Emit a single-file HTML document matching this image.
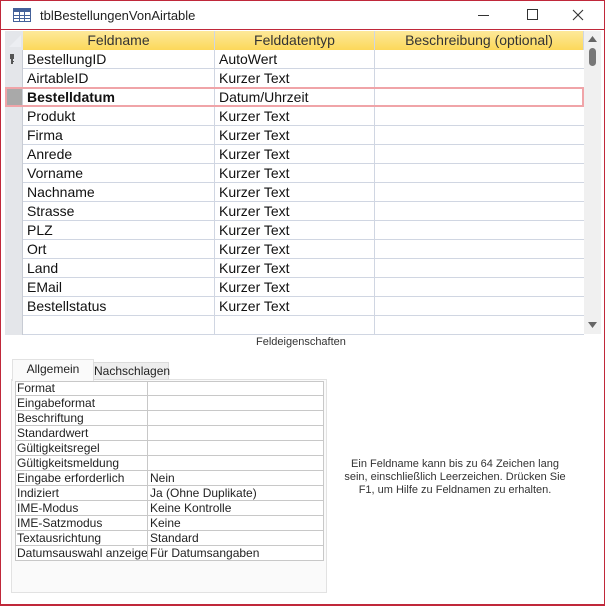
<!DOCTYPE html><html><head><style>
*{margin:0;padding:0;box-sizing:border-box}
body{width:605px;height:606px;background:#fff;font-family:"Liberation Sans",sans-serif;position:relative;overflow:hidden;color:#222}
.a{position:absolute}
.win{left:0;top:0;width:605px;height:606px;border:1px solid #c0283a;border-bottom-width:2px}
.hdr{top:31px;height:19px;background:linear-gradient(#fde99a,#fcd85a);border-right:1px solid #d0d6e2;font-size:14px;text-align:center;line-height:19px;color:#333}
.row{left:5px;width:579px;height:19px;border-bottom:1px solid #d0d6e2}
.c{position:absolute;top:0;height:19px;line-height:19px;font-size:14px;padding-left:4px;color:#111}
.sel{position:absolute;left:0;top:0;width:18px;height:19px;background:#e4e6ea;border-right:1px solid #c8ccd4}
.pr{left:15px;width:309px;height:15px;border-bottom:1px solid #c8c8c8;font-size:12px;line-height:14px}
.pr span{position:absolute;top:0}
</style></head><body>
<div class="a win"></div>
<!-- title -->
<svg class="a" style="left:13px;top:8px" width="18" height="14"><rect x=".5" y=".5" width="17" height="13" fill="#fff" stroke="#44619a"/><rect x="1" y="1" width="16" height="3" fill="#44619a"/><path d="M1 7.5h16M1 10.5h16M6.5 4v10M11.5 4v10" stroke="#44619a"/></svg>
<div class="a" style="left:40px;top:8px;font-size:13px;color:#222">tblBestellungenVonAirtable</div>
<div class="a" style="left:478px;top:15px;width:11px;height:1px;background:#333"></div>
<div class="a" style="left:527px;top:9px;width:11px;height:11px;border:1px solid #333"></div>
<svg class="a" style="left:572px;top:9px" width="12" height="12"><path d="M1 1L11 11M11 1L1 11" stroke="#333" stroke-width="1.1"/></svg>
<div class="a" style="left:1px;top:29px;width:603px;height:1px;background:#c0283a"></div>
<!-- grid -->
<div class="a" style="left:5px;top:31px;width:18px;height:19px;background:#e4e6ea"></div>
<svg class="a" style="left:6px;top:32px" width="16" height="16"><path d="M3 15L15 3V15Z" fill="#eceef2"/></svg>
<div class="a hdr" style="left:23px;width:192px">Feldname</div>
<div class="a hdr" style="left:215px;width:160px">Felddatentyp</div>
<div class="a hdr" style="left:375px;width:209px">Beschreibung (optional)</div>
<div id="g"></div>
<div class="a" style="left:584px;top:31px;width:17px;height:303px;background:#f0f0f0"></div>
<svg class="a" style="left:586px;top:33px" width="13" height="300"><path d="M2 9L6.5 3L11 9Z" fill="#666"/><rect x="3" y="15" width="7" height="18" rx="3.5" fill="#777"/><path d="M2 289L6.5 295L11 289Z" fill="#666"/></svg>
<div class="a" style="left:256px;top:336px;font-size:11px;color:#333">Feldeigenschaften</div>
<!-- props -->
<div class="a" style="left:11px;top:379px;width:316px;height:214px;background:#fafafa;border:1px solid #e2e2e2"></div>
<div class="a" style="left:12px;top:359px;width:82px;height:22px;background:#fafafa;border:1px solid #e2e2e2;border-bottom:none;font-size:12px;text-align:center;line-height:19px">Allgemein</div>
<div class="a" style="left:93px;top:362px;width:76px;height:18px;background:#eeeeee;border:1px solid #dcdcdc;font-size:12px;text-align:center;line-height:17px">Nachschlagen</div>
<div class="a" style="left:15px;top:381px;width:309px;height:180px;border:1px solid #c8c8c8;border-bottom:none;background:#fff"></div>
<div class="a" style="left:147px;top:381px;width:1px;height:180px;background:#c8c8c8"></div>
<div id="p"></div>
<div class="a" style="left:340px;top:458px;width:230px;font-size:11px;line-height:13px;text-align:center;color:#333">Ein Feldname kann bis zu 64 Zeichen lang sein, einschließlich Leerzeichen. Drücken Sie F1, um Hilfe zu Feldnamen zu erhalten.</div>
<script>
var r=[["BestellungID","AutoWert"],["AirtableID","Kurzer Text"],["Bestelldatum","Datum/Uhrzeit"],["Produkt","Kurzer Text"],["Firma","Kurzer Text"],["Anrede","Kurzer Text"],["Vorname","Kurzer Text"],["Nachname","Kurzer Text"],["Strasse","Kurzer Text"],["PLZ","Kurzer Text"],["Ort","Kurzer Text"],["Land","Kurzer Text"],["EMail","Kurzer Text"],["Bestellstatus","Kurzer Text"],["",""]];
var h="";r.forEach(function(x,i){var t=50+i*19;var s=i==2?'background:#a9a9a9':'';
h+='<div class="a row" style="top:'+t+'px"><div class="sel" style="'+s+'"></div><div class="c" style="left:18px;width:192px;border-right:1px solid #d0d6e2;'+(i==2?'font-weight:bold':'')+'">'+x[0]+'</div><div class="c" style="left:210px;width:160px;border-right:1px solid #d0d6e2">'+x[1]+'</div></div>';});
h+='<div class="a" style="left:5px;top:87px;width:579px;height:20px;border:2px solid #f0a4a8"></div>';
h+='<svg class="a" style="left:7px;top:53px" width="10" height="14"><path d="M3 1h4v5H6v2h1v1H6v2H4V6H3z" fill="#555"/></svg>';
document.getElementById("g").innerHTML=h;
var p=[["Format",""],["Eingabeformat",""],["Beschriftung",""],["Standardwert",""],["Gültigkeitsregel",""],["Gültigkeitsmeldung",""],["Eingabe erforderlich","Nein"],["Indiziert","Ja (Ohne Duplikate)"],["IME-Modus","Keine Kontrolle"],["IME-Satzmodus","Keine"],["Textausrichtung","Standard"],["Datumsauswahl anzeigen","Für Datumsangaben"]];
h="";p.forEach(function(x,i){h+='<div class="a pr" style="top:'+(381+i*15)+'px"><span style="left:2px;width:130px;overflow:hidden;white-space:nowrap">'+x[0]+'</span><span style="left:135px">'+x[1]+'</span></div>';});
document.getElementById("p").innerHTML=h;
</script>
</body></html>
